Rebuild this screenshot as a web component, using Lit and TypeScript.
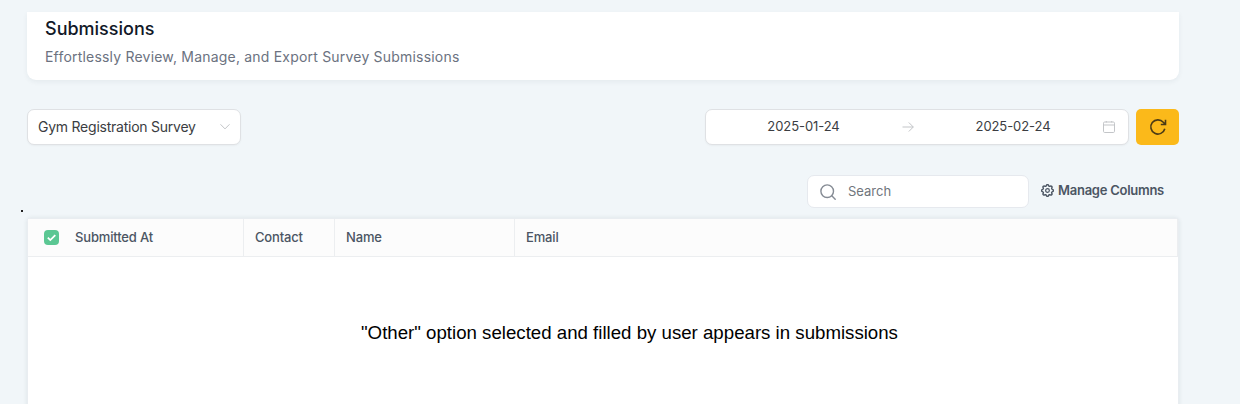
import { LitElement, html, css } from "lit";
import { customElement } from "lit/decorators.js";

@customElement("app-root")
export class AppRoot extends LitElement {
  static styles = css`
    :host {
      display: block;
      box-sizing: border-box;
      height: 404px;
      overflow: hidden;
      padding: 12px 61px 0 27px;
      background: #f1f6f9;
      font-family: Inter, "Liberation Sans", sans-serif;
      color: #4b5563;
    }
    * { box-sizing: border-box; }
    svg { display: block; flex: none; fill: none; stroke: currentColor; }
    .head {
      height: 68px;
      padding: 5px 18px 0;
      background: #fff;
      border-radius: 0 0 9px 9px;
      box-shadow: 0 2px 5px rgba(30, 50, 70, 0.06);
    }
    h1 { margin: 0; font-size: 18px; line-height: 24px; font-weight: 500; color: #111827; }
    .sub { margin: 6px 0 0; font-size: 14px; line-height: 20px; letter-spacing: 0.2px; color: #6b7280; }
    .bar { display: flex; height: 36px; margin-top: 29px; color: #3b3d42; }
    .box {
      display: flex;
      align-items: center;
      background: #fff;
      border: 1px solid #dfe1e4;
      border-radius: 7px;
      box-shadow: 0 1px 2px rgba(0, 0, 0, 0.04);
    }
    .select { width: 214px; padding: 0 9px 1px 10px; justify-content: space-between; font-size: 14px; letter-spacing: -0.24px; }
    .range { width: 424px; margin-left: auto; padding: 0 13px 2px 0; font-size: 13px; letter-spacing: -0.08px; }
    .date { flex: none; width: 195px; text-align: center; }
    .date.end { width: 188px; padding-left: 8px; }
    .pale { color: #c3c5c8; }
    .select .pale, .range .pale { margin-top: 1px; }
    .calendar { margin-left: auto; }
    .refresh {
      width: 43px;
      margin-left: 7px;
      padding: 0;
      border: 0;
      border-radius: 5px;
      background: #fbb91a;
      color: #4b3b16;
      display: grid;
      place-items: center;
    }
    .tools { display: flex; justify-content: flex-end; height: 33px; margin-top: 30px; padding-right: 15px; }
    .search {
      width: 222px;
      padding: 0 12px;
      gap: 12px;
      border-color: #e6e9ee;
      font-size: 13px;
      color: #70757c;
      box-shadow: none;
    }
    .search span { padding-bottom: 1px; }
    .search svg { color: #858b94; }
    .manage {
      display: flex;
      align-items: center;
      gap: 4px;
      margin-left: 12px;
      padding-bottom: 3px;
      font-size: 13px;
      font-weight: 600;
      letter-spacing: -0.26px;
      color: #4b5563;
      white-space: nowrap;
    }
    .manage svg { margin-top: 1px; }
    .dot { width: 2px; height: 2px; margin: 2px 0 0 -6px; background: #222; }
    .table {
      height: 230px;
      margin-top: 6px;
      background: #fff;
      border: 1px solid #e9edf1;
      box-shadow: 0 0 4px rgba(30, 50, 70, 0.1);
      border-radius: 4px 4px 0 0;
    }
    .row {
      display: grid;
      grid-template-columns: 216px 91px 180px 1fr;
      height: 38px;
      background: #fcfcfc;
      border-bottom: 1px solid #eceef0;
      font-size: 13px;
      font-weight: 500;
      letter-spacing: -0.16px;
    }
    .cell { display: flex; align-items: center; padding: 0 0 2px 11px; border-right: 1px solid #eceef0; }
    .first { padding-left: 16px; gap: 16px; }
    .check { width: 15px; height: 15px; margin-top: 2px; border-radius: 4px; background: #5bc793; color: #fff; }
    .note {
      margin: 64px 0 0;
      padding-left: 333px;
      font-family: "Liberation Sans", Arial, sans-serif;
      font-size: 18.67px;
      line-height: 24px;
      color: #000;
      white-space: nowrap;
    }
  `;

  render() {
    return html`
      <header class="head">
        <h1>Submissions</h1>
        <p class="sub">Effortlessly Review, Manage, and Export Survey Submissions</p>
      </header>
      <div class="bar">
        <div class="box select">
          <span>Gym Registration Survey</span>
          <svg class="pale" width="12" height="12" viewBox="0 0 12 12"><path d="M1.5 3.3 6 7.9l4.5-4.6" /></svg>
        </div>
        <div class="box range">
          <span class="date">2025-01-24</span>
          <svg class="pale" width="14" height="14" viewBox="0 0 14 14"><path d="M1.5 7h10.8M7.8 2.5 12.3 7l-4.5 4.5" /></svg>
          <span class="date end">2025-02-24</span>
          <svg class="pale calendar" width="12" height="12" viewBox="0 0 12 12">
            <rect x=".5" y="1" width="11" height="10.5" rx="1.2" /><path d="M.5 4h11M3.3 0v1.5M8.7 0v1.5" />
          </svg>
        </div>
        <button class="refresh" aria-label="Refresh">
          <svg width="18" height="18" viewBox="0 0 18 18" stroke-width="1.6">
            <path d="M15.8 10.7A7.1 7.1 0 1 1 14.3 4.3L16.2 6.2M16.5 1.8v4.7h-4.7" />
          </svg>
        </button>
      </div>
      <div class="tools">
        <div class="box search">
          <svg width="16" height="16" viewBox="0 0 16 16" stroke-width="1.4" stroke-linecap="round">
            <circle cx="7.2" cy="7.2" r="6.3" /><path d="m11.8 11.8 3.4 3.4" />
          </svg>
          <span>Search</span>
        </div>
        <div class="manage">
          <svg width="13" height="13" viewBox="0 0 24 24" stroke-width="2.2" stroke-linejoin="round">
            <path d="M10.3 4.3c.4-1.8 3-1.8 3.4 0a1.7 1.7 0 0 0 2.6 1.1c1.5-.9 3.3.8 2.4 2.4a1.7 1.7 0 0 0 1 2.5c1.8.4 1.8 3 0 3.4a1.7 1.7 0 0 0-1 2.6c.9 1.5-.8 3.3-2.4 2.4a1.7 1.7 0 0 0-2.6 1c-.4 1.8-3 1.8-3.4 0a1.7 1.7 0 0 0-2.6-1c-1.5.9-3.3-.8-2.4-2.4a1.7 1.7 0 0 0-1-2.6c-1.8-.4-1.8-3 0-3.4a1.7 1.7 0 0 0 1-2.6c-.9-1.5.8-3.3 2.4-2.4 1 .6 2.3.1 2.6-1z" transform="translate(-2.4 -2.4) scale(1.2)" />
            <circle cx="12" cy="12" r="3.4" />
          </svg>
          <span>Manage Columns</span>
        </div>
      </div>
      <div class="dot"></div>
      <div class="table">
        <div class="row">
          <div class="cell first">
            <svg class="check" viewBox="0 0 15 15" stroke-width="1.8"><path d="m3.8 7.7 2.5 2.4 5-5" /></svg>
            <span>Submitted At</span>
          </div>
          <div class="cell">Contact</div>
          <div class="cell">Name</div>
          <div class="cell">Email</div>
        </div>
        <p class="note">"Other" option selected and filled by user appears in submissions</p>
      </div>
    `;
  }
}
